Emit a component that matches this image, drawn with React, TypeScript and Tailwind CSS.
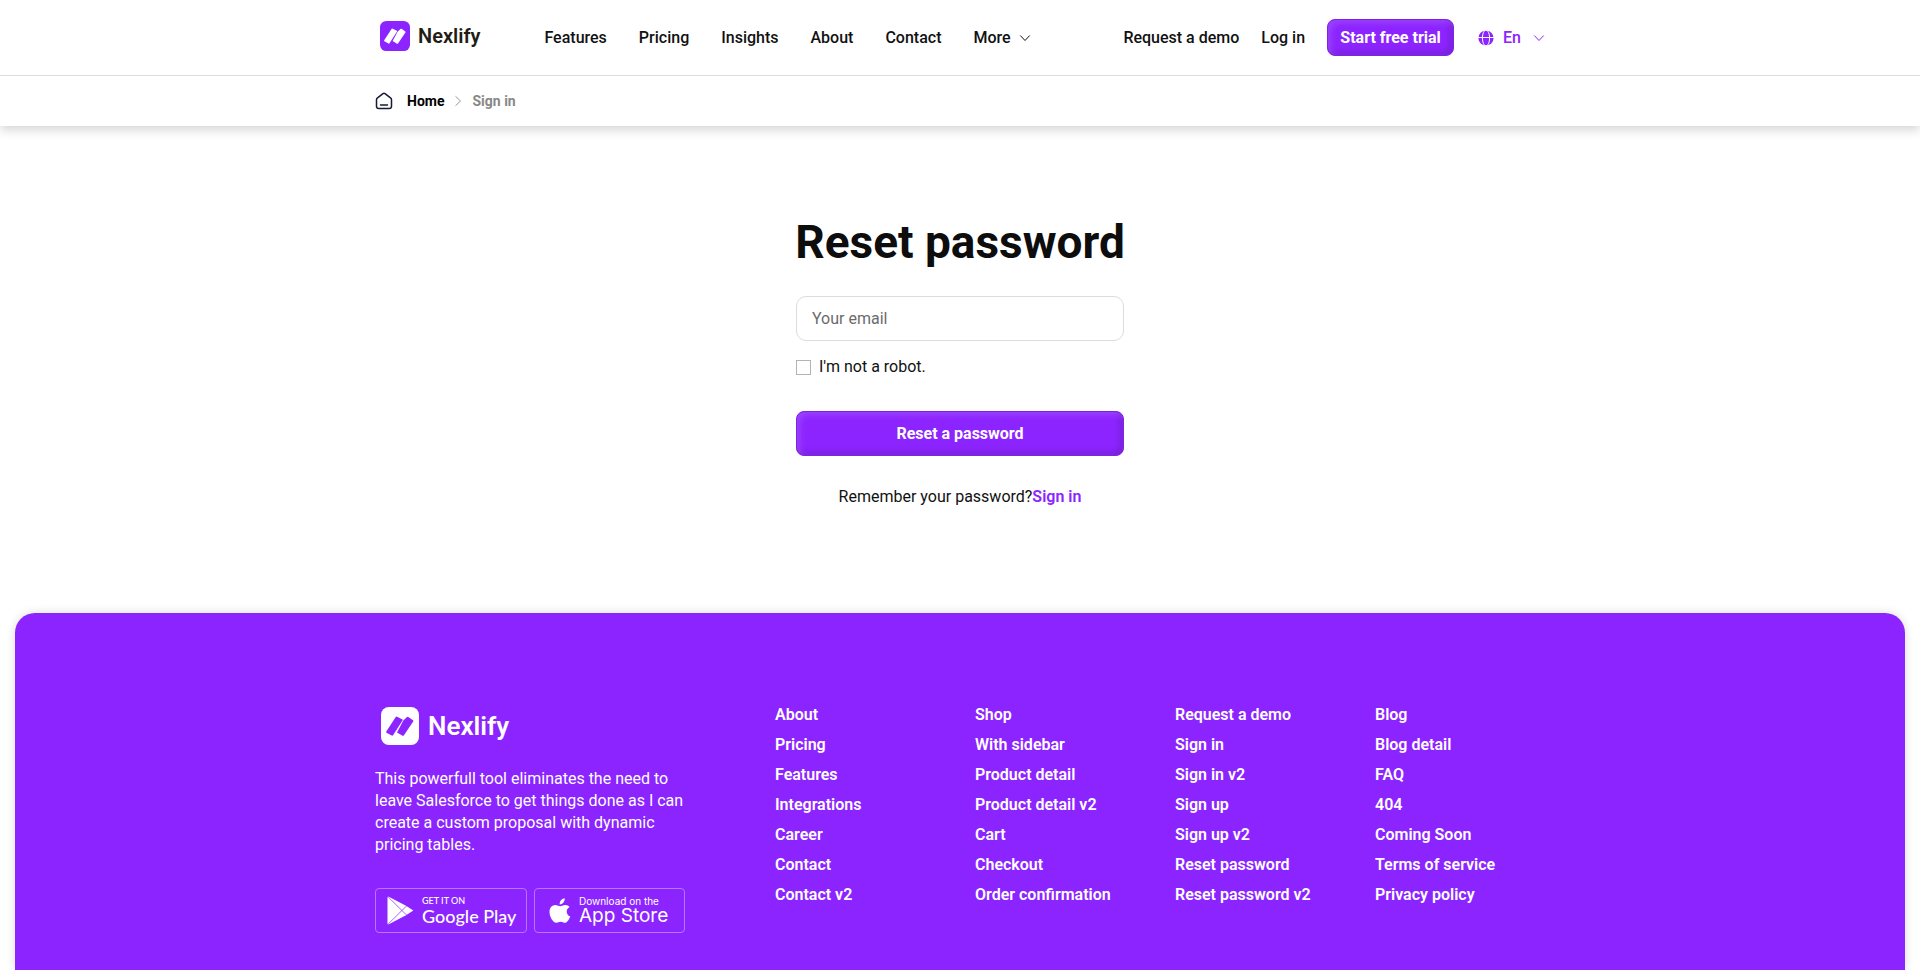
import React from "react";

const NAV = ["Features", "Pricing", "Insights", "About", "Contact"];

const FOOTER_COLUMNS = [
  ["About", "Pricing", "Features", "Integrations", "Career", "Contact", "Contact v2"],
  ["Shop", "With sidebar", "Product detail", "Product detail v2", "Cart", "Checkout", "Order confirmation"],
  ["Request a demo", "Sign in", "Sign in v2", "Sign up", "Sign up v2", "Reset password", "Reset password v2"],
  ["Blog", "Blog detail", "FAQ", "404", "Coming Soon", "Terms of service", "Privacy policy"],
];

function LogoMark({ className }: { className: string }) {
  return (
    <svg viewBox="0 0 38 38" className={className} aria-hidden="true">
      <rect width="38" height="38" rx="8" fill="currentColor" />
      <g className="fill-(--mark)">
        <path d="M5.300 24.500 14.600 10.200a1.200 1.200 0 0 1 1.500-.5L22 12.800 12 28.300a1 1 0 0 1-1.300.3L5.500 25.700a.9.9 0 0 1-.2-1.200Z" />
        <path d="M22.300 13.500 26 10a1.200 1.200 0 0 1 1.300-.1l4.700 3.300a1 1 0 0 1 .2 1.300L22.800 28.400a1 1 0 0 1-1.300.3L16 25.400Z" />
      </g>
    </svg>
  );
}

function Chevron({ className }: { className: string }) {
  return (
    <svg viewBox="0 0 12 8" className={className} fill="none" stroke="currentColor" strokeWidth="1" aria-hidden="true">
      <path d="m1.300 1.500 4.700 5 4.700-5" />
    </svg>
  );
}

function Globe() {
  return (
    <svg viewBox="0 0 16 16" className="size-4" fill="none" aria-hidden="true">
      <circle cx="8" cy="8" r="7.600" fill="currentColor" />
      <g stroke="white" strokeWidth="1">
        <ellipse cx="8" cy="8" rx="3.600" ry="8" />
        <path d="M0 7.500h16" />
      </g>
    </svg>
  );
}

function HomeIcon() {
  return (
    <svg viewBox="0 0 18 18" className="size-[18px] text-[#141b34]" fill="none" stroke="currentColor" strokeWidth="1.500" strokeLinecap="round" strokeLinejoin="round" aria-hidden="true">
      <path d="M1.500 7.800c0-.9.300-1.500 1-2L8 1.600c.7-.5 1.300-.5 2 0l5.500 4.200c.7.500 1 1.100 1 2v6.400c0 1.700-.6 2.300-2.300 2.300H3.800c-1.700 0-2.300-.6-2.300-2.300Z" />
      <path d="M5.500 13h7" />
    </svg>
  );
}

function PlayIcon() {
  return (
    <svg viewBox="0 0 27 29" className="h-[29px] w-[27px]" aria-hidden="true">
      <path d="M.5 1.200 1.300.5 19 9.800 26.300 14.500 19 19.300 1.300 28.500.5 27.900Z" fill="white" />
      <path d="M1 .8 20 19.500M1 28.200 20 9.500" stroke="#8c24ff" strokeWidth=".7" fill="none" />
    </svg>
  );
}

function AppleIcon() {
  return (
    <svg viewBox="0 0 22 26" className="h-[26px] w-[22px]" fill="white" aria-hidden="true">
      <path d="M15.700.3c.2 1.600-.4 3.100-1.300 4.200-.9 1.200-2.300 2-3.700 1.900-.2-1.500.5-3.100 1.300-4.100C12.900 1.200 14.500.4 15.700.3ZM20.600 8.900c-2 1.200-2.900 2.800-2.900 4.600 0 2.200 1.200 4.200 3.500 5-.7 2.200-2.600 5.700-4.700 6.200-1.700.3-2.600-1-4.700-1-2.200 0-2.900 1.100-4.600 1C4 24.600.5 18.700.5 13.900c0-4.500 2.900-6.900 5.800-7 2 0 3.800 1.300 4.900 1.300 1.200 0 3.100-1.500 5.400-1.300 1.500.1 3 .7 4 2Z" />
    </svg>
  );
}

const BUTTON =
  "bg-[#8c24ff] font-bold text-white shadow-[inset_3px_3px_6px_rgba(255,255,255,0.15),inset_-3px_-3px_6px_rgba(0,0,0,0.15)] border border-[#7f22e6]";

export default function App() {
  return (
    <div className="flex min-h-screen flex-col bg-white font-[Roboto,sans-serif] text-base text-[#111]">
      <header className="shadow-[0_4px_10px_rgba(0,0,0,0.17)]">
        <div className="border-b border-[#dcdcdc]">
          <div className="mx-auto flex h-[75px] max-w-[1170px] items-center font-medium">
            <a href="#" className="mb-[3px] ml-[5px] flex items-center gap-2 text-xl leading-6 font-semibold text-[#221c14]">
              <LogoMark className="size-[30px] text-[#8c24ff] [--mark:white]" />
              Nexlify
            </a>
            <nav className="ml-16 flex items-center gap-8">
              {NAV.map((item) => (
                <a key={item} href="#">{item}</a>
              ))}
              <button type="button" className="flex items-center gap-2">
                More
                <Chevron className="h-2 w-3" />
              </button>
            </nav>
            <div className="ml-auto flex items-center">
              <a href="#" className="mr-[22px]">Request a demo</a>
              <a href="#" className="mr-[22px]">Log in</a>
              <button type="button" className={`${BUTTON} mr-6 h-[37px] w-[127px] rounded-lg`}>Start free trial</button>
              <button type="button" className="flex items-center text-[#8c24ff]">
                <Globe />
                <span className="mr-3 ml-[9px]">En</span>
                <Chevron className="h-2 w-3" />
              </button>
            </div>
          </div>
        </div>
        <nav aria-label="Breadcrumb" className="mx-auto flex h-[50px] max-w-[1170px] items-center text-sm font-bold">
          <HomeIcon />
          <a href="#" className="ml-[14px] text-black">Home</a>
          <Chevron className="mx-2 h-2 w-3 -rotate-90 text-[#999]" />
          <span className="text-[#888]">Sign in</span>
        </nav>
      </header>

      <main className="flex flex-col items-center pt-[91px] pb-[104px]">
        <h1 className="text-[46px] leading-[50px] font-bold whitespace-nowrap text-[#0d0d0d]">Reset password</h1>
        <form className="mt-[29px] flex w-[328px] flex-col" onSubmit={(e) => e.preventDefault()}>
          <input type="email" aria-label="Your email" placeholder="Your email" className="h-[45px] rounded-[10px] border border-[#dcdcdc] px-[15px] placeholder:text-[#6b6b6b]" />
          <label className="mt-[14px] flex items-center gap-2 leading-6 text-[#111]">
            <input type="checkbox" className="size-[15px] appearance-none border border-[#b3b3b3] checked:bg-[#8c24ff]" />
            I'm not a robot.
          </label>
          <button type="submit" className={`${BUTTON} mt-8 h-[45px] rounded-lg`}>Reset a password</button>
        </form>
        <p className="mt-[29px] leading-6">
          Remember your password?<a href="#" className="font-semibold text-[#8c24ff]">Sign in</a>
        </p>
      </main>

      <footer className="mx-[15px] grow rounded-t-[20px] bg-[#8c24ff] text-white shadow-[0_0_10px_rgba(0,0,0,0.15)]">
        <div className="mx-auto flex max-w-[1170px] justify-between pt-[87px]">
          <div className="w-[311px]">
            <a href="#" className="mt-[7px] ml-[6px] flex items-center gap-[9px] text-[26px] leading-[38px] font-semibold">
              <LogoMark className="size-[38px] text-white [--mark:#8c24ff]" />
              Nexlify
            </a>
            <p className="mt-[23px] leading-[22px]">
              This powerfull tool eliminates the need to leave Salesforce to get things done as I can create a custom proposal with dynamic pricing tables.
            </p>
            <div className="mt-8 flex gap-[7px]">
              <a href="#" className="flex h-[45px] w-[152px] items-center gap-2 rounded-[4px] border border-[#b973ff] pl-[11px] font-[Lato,sans-serif]">
                <PlayIcon />
                <span className="flex flex-col whitespace-nowrap">
                  <span className="text-[9px] leading-[10px] font-medium">GET IT ON</span>
                  <span className="text-lg leading-5 font-medium">Google Play</span>
                </span>
              </a>
              <a href="#" className="flex h-[45px] w-[151px] items-center gap-2 rounded-[4px] border border-[#b973ff] pl-[14px] font-[Inter,sans-serif]">
                <AppleIcon />
                <span className="flex flex-col whitespace-nowrap">
                  <span className="text-[10px] leading-[10px]">Download on the</span>
                  <span className="text-[19px] leading-5">App Store</span>
                </span>
              </a>
            </div>
          </div>
          <div className="flex">
            {FOOTER_COLUMNS.map((column) => (
              <ul key={column[0]} className="w-[200px] last:w-[170px]">
                {column.map((item) => (
                  <li key={item} className="leading-[30px] font-semibold">
                    <a href="#">{item}</a>
                  </li>
                ))}
              </ul>
            ))}
          </div>
        </div>
      </footer>
    </div>
  );
}
